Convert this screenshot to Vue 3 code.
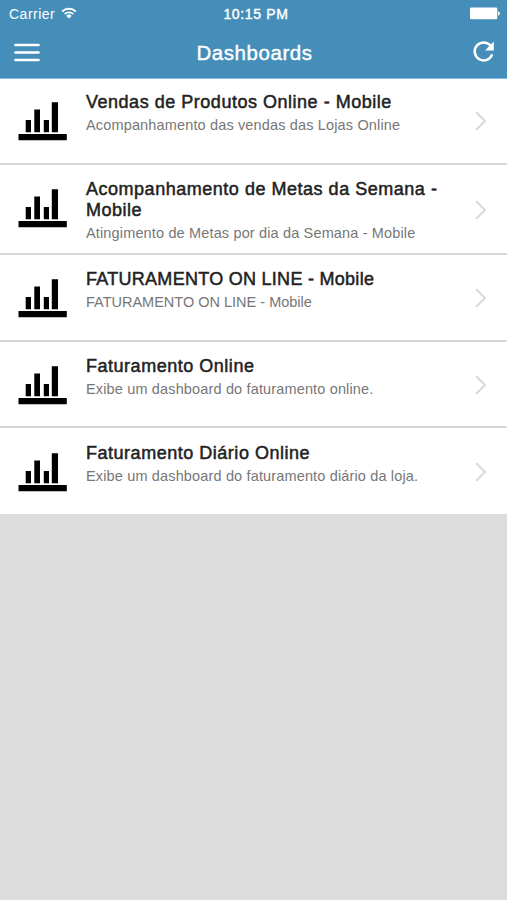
<script setup>
const dashboards = [
  { id: 1, name: 'Vendas de Produtos Online - Mobile', description: 'Acompanhamento das vendas das Lojas Online' },
  { id: 2, name: 'Acompanhamento de Metas da Semana - Mobile', description: 'Atingimento de Metas por dia da Semana - Mobile' },
  { id: 3, name: 'FATURAMENTO ON LINE - Mobile', description: 'FATURAMENTO ON LINE - Mobile' },
  { id: 4, name: 'Faturamento Online', description: 'Exibe um dashboard do faturamento online.' },
  { id: 5, name: 'Faturamento Diário Online', description: 'Exibe um dashboard do faturamento diário da loja.' },
];
</script>

<template>
  <div class="app">
    <header class="header">
      <div class="status-bar">
        <div class="carrier">
          <span>Carrier</span>
          <svg class="wifi" width="16" height="12" viewBox="0 0 16 12">
            <path d="M1.2 4.5a9.8 9.8 0 0 1 13.6 0M3.7 7.1a6.2 6.2 0 0 1 8.6 0" fill="none" stroke="#fff" stroke-width="1.9" />
            <path d="M5.3 8.9a3.8 3.8 0 0 1 5.4 0L8 11.6z" fill="#fff" />
          </svg>
        </div>
        <span class="time">10:15 PM</span>
        <svg class="battery" width="30" height="13" viewBox="0 0 30 13">
          <rect x="0" y="0.5" width="27.3" height="11.8" rx="1.2" fill="#fff" />
          <path d="M28 4.6c2.4 0 2.4 3.8 0 3.8z" fill="#fff" />
        </svg>
      </div>

      <div class="nav-bar">
        <svg class="menu" width="26" height="20" viewBox="0 0 26 20">
          <path d="M1.5 2h23M1.5 9.5h23M1.5 17h23" stroke="#fff" stroke-width="2.7" stroke-linecap="round" />
        </svg>
        <h1>Dashboards</h1>
        <svg class="refresh" width="22" height="22" viewBox="0 0 22 22">
          <path d="M17.6 4.6A9 9 0 1 0 19.2 13.4" fill="none" stroke="#fff" stroke-width="2.5" />
          <path d="M20.8 0.6v8.8H12z" fill="#fff" />
        </svg>
      </div>
    </header>

    <ul class="list">
      <li v-for="dashboard in dashboards" :key="dashboard.id">
        <svg class="chart" width="49" height="39" viewBox="0 0 49 39">
          <path d="M7.7 18h5.3v12.3H7.7zM16.3 7.4H22v22.9h-5.7zM25.8 18H31v12.3h-5.2zM33.8 0.2H40v30.1h-6.2zM0.5 32.1h48.3v6.1H0.5z" />
        </svg>
        <div class="info">
          <h2>{{ dashboard.name }}</h2>
          <p>{{ dashboard.description }}</p>
        </div>
        <svg class="chevron" width="12" height="20" viewBox="0 0 12 20">
          <path d="M1.2 1.2L10 10l-8.8 8.8" fill="none" stroke="#d8d8d8" stroke-width="2" />
        </svg>
      </li>
    </ul>
  </div>
</template>

<style>
body {
  background: #dcdcdc;
}
</style>

<style scoped>
.app {
  min-height: 900px;
  background: #dcdcdc;
  font-family: "Liberation Sans", Arial, sans-serif;
}

.header {
  height: 79px;
  box-sizing: border-box;
  background: #448eb9;
  border-bottom: 1px solid #80bfe3;
  color: white;
}

.status-bar {
  display: grid;
  grid-template-columns: 1fr auto 1fr;
  align-items: center;
  height: 27px;
  padding: 0 7px 0 9px;
  font-size: 14px;
}

.carrier {
  display: flex;
  align-items: center;
  gap: 6px;
  letter-spacing: 0.5px;
}

.wifi {
  margin-bottom: 2px;
}

.time {
  padding-left: 3px;
  letter-spacing: 0.65px;
  -webkit-text-stroke: 0.4px white;
}

.battery {
  justify-self: end;
}

.nav-bar {
  display: grid;
  grid-template-columns: 1fr auto 1fr;
  align-items: center;
  height: 52px;
  padding: 0 12px 0 14px;
}

h1 {
  margin: 0;
  font-size: 20.5px;
  font-weight: normal;
  letter-spacing: 0.55px;
  -webkit-text-stroke: 0.4px white;
}

.refresh {
  justify-self: end;
  margin-bottom: 3px;
}

.list {
  list-style: none;
  margin: 0;
  padding: 0;
}

li {
  display: flex;
  align-items: flex-start;
  height: 86.7px;
  box-sizing: border-box;
  padding: 14.8px 20px 0 18px;
  background: white;
  border-bottom: 2px solid #d8d8d8;
}

li:first-child {
  height: 86px;
  padding-top: 13px;
}

li:nth-child(2) {
  height: 90px;
  padding-top: 14.2px;
}

/* all-caps row */
li:nth-child(3) {
  padding-top: 14.3px;
}

li:nth-child(3) h2 {
  letter-spacing: 0.28px;
}

li:nth-child(3) p {
  letter-spacing: 0;
}

li:last-child {
  height: 85.6px;
  border-bottom: none;
}

.chart {
  flex: none;
  margin-top: 10px;
}

.info {
  flex: 1;
  padding-left: 19px;
}

h2 {
  margin: 0;
  max-width: 365px;
  font-size: 18px;
  line-height: 21px;
  font-weight: normal;
  letter-spacing: 0.52px;
  color: #222;
  -webkit-text-stroke: 0.5px #222;
}

p {
  margin: 3px 0 0;
  font-size: 14.5px;
  line-height: 18px;
  letter-spacing: 0.15px;
  color: #777;
}

.chevron {
  flex: none;
  margin-top: 18.5px;
}

li:nth-child(2) .chevron {
  margin-top: 20.5px;
}
</style>
